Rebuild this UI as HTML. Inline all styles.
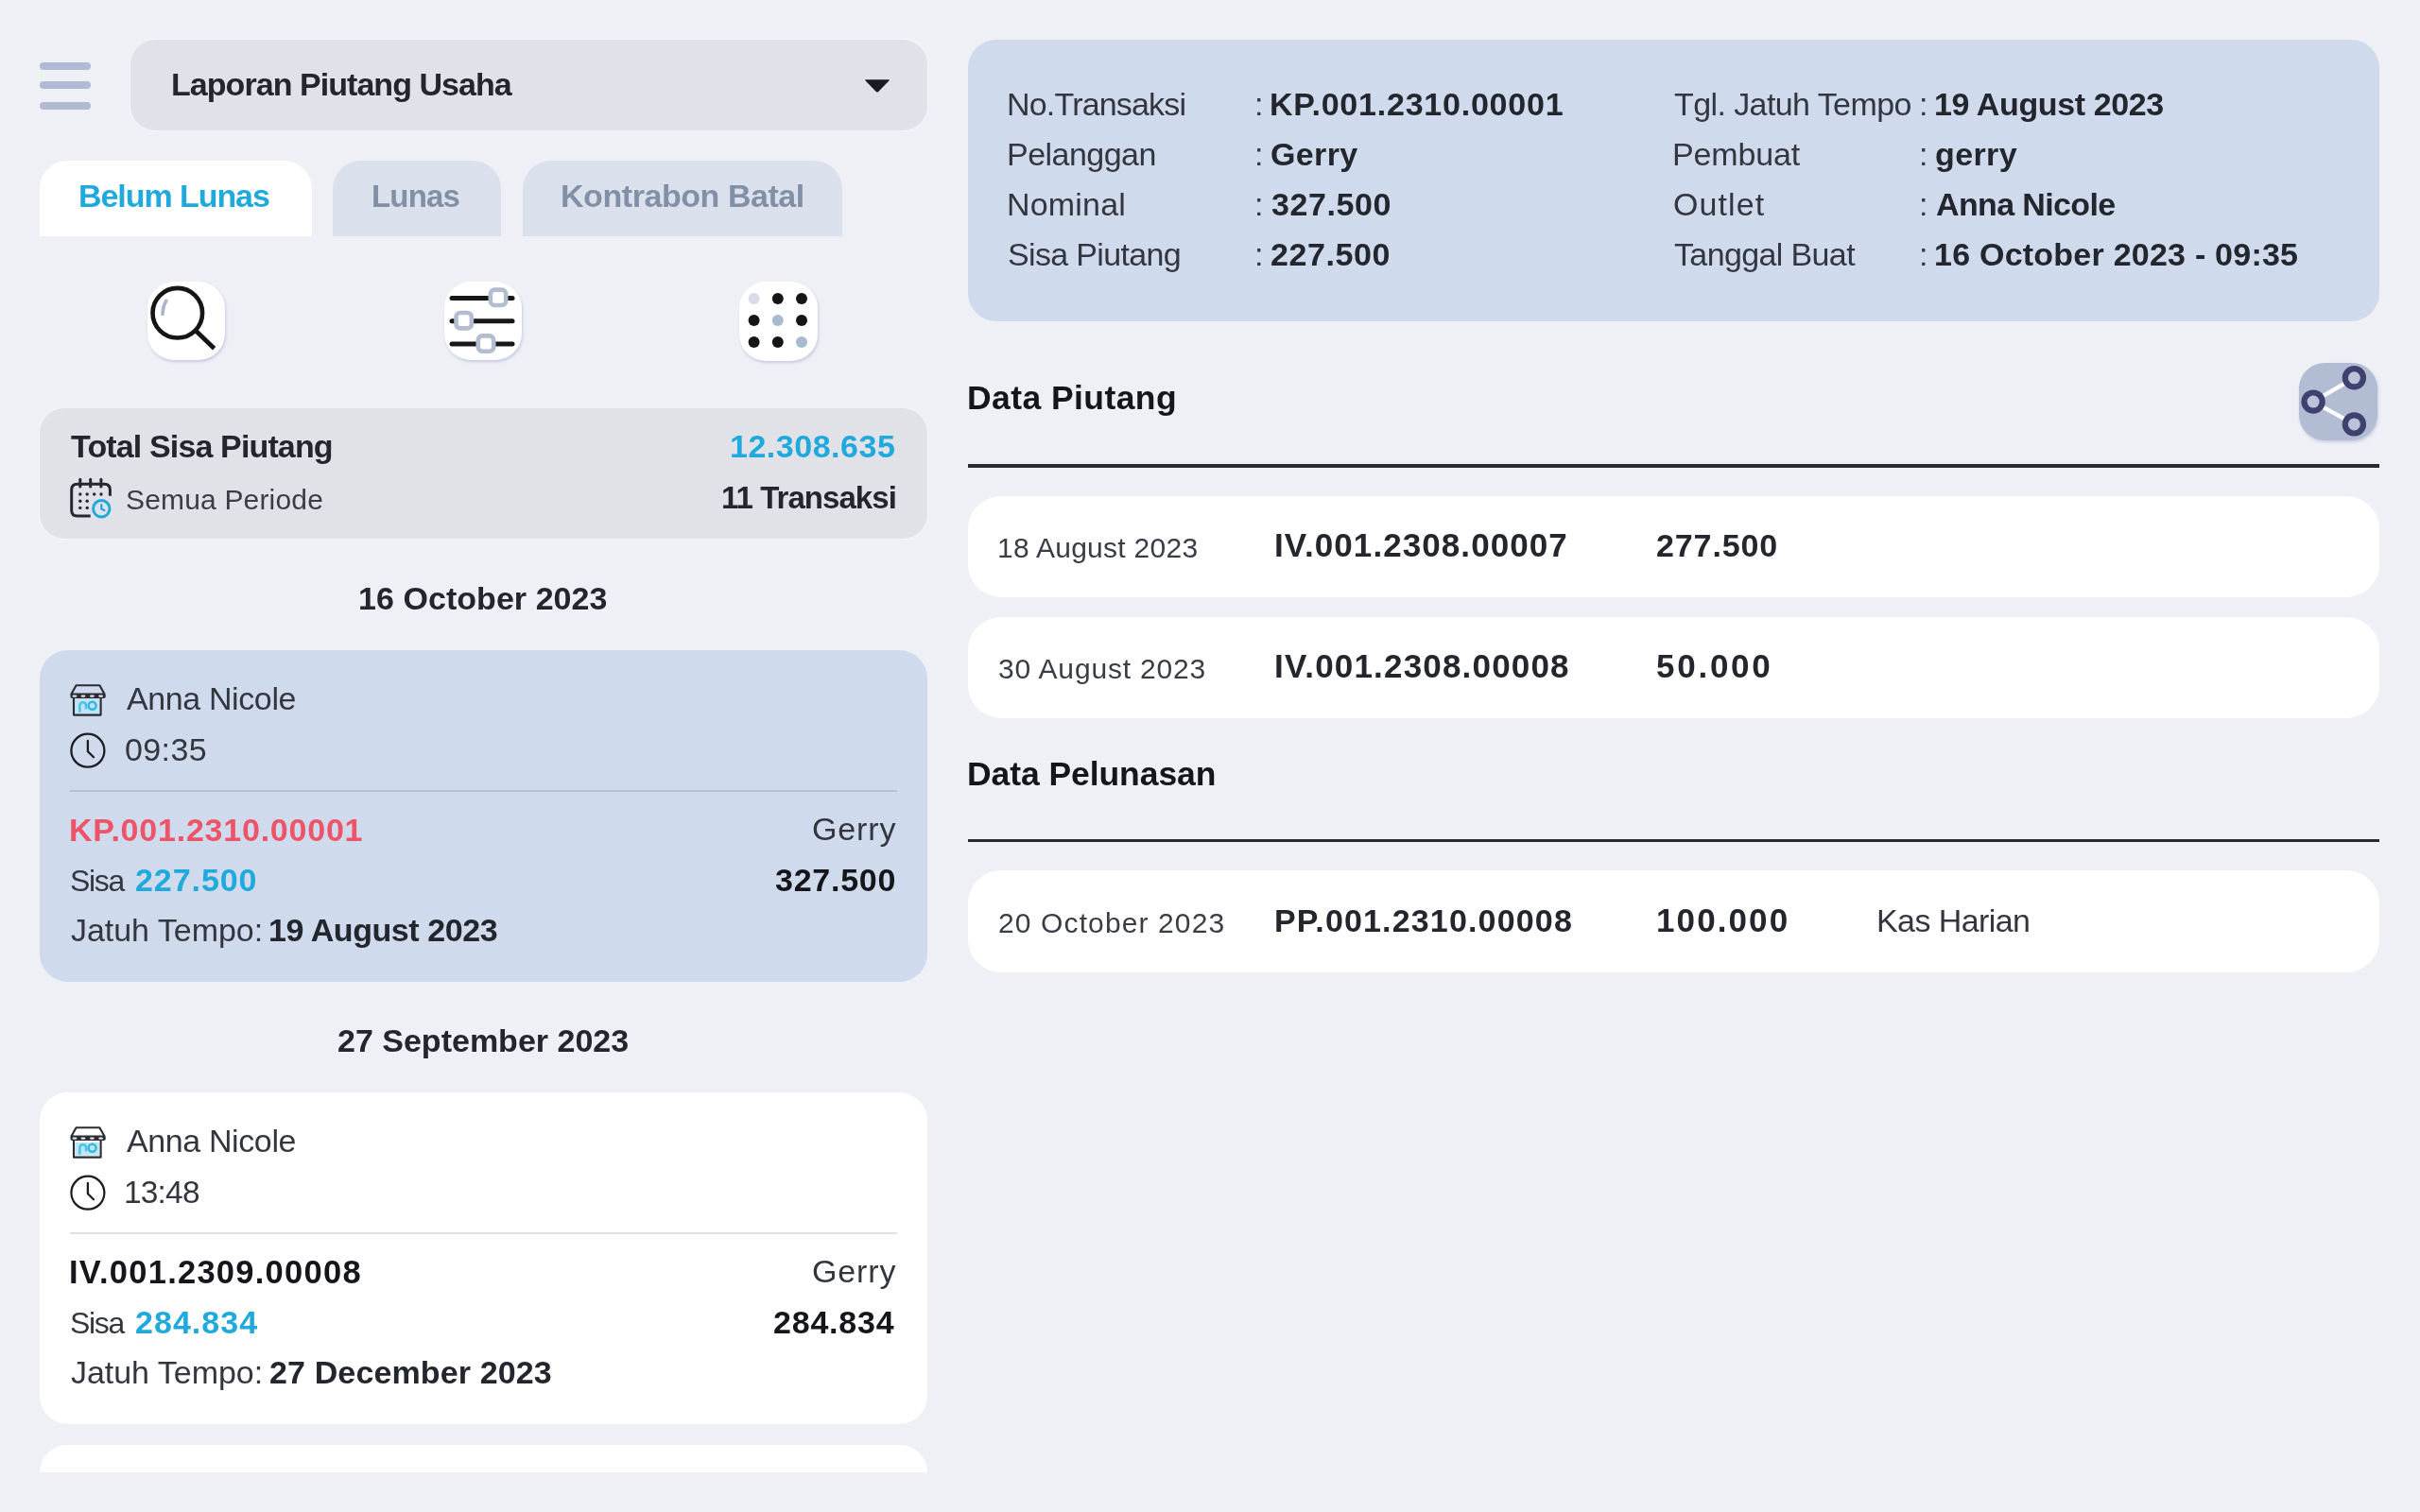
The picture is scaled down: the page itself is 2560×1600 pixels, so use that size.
<!DOCTYPE html>
<html lang="id"><head><meta charset="utf-8"><title>Laporan Piutang Usaha</title>
<style>
html,body{margin:0;padding:0}
body{width:2560px;height:1600px;overflow:hidden;background:#eef0f6;position:relative;font-family:"Liberation Sans",sans-serif}
.b{position:absolute;display:block}
.t{position:absolute;white-space:nowrap;display:block;will-change:transform}
</style></head><body>
<div class="b" style="left:42px;top:66px;width:54px;height:8px;background:#b0bad2;border-radius:4px;"></div>
<div class="b" style="left:42px;top:86px;width:54px;height:8px;background:#b0bad2;border-radius:4px;"></div>
<div class="b" style="left:42px;top:108px;width:54px;height:8px;background:#b0bad2;border-radius:4px;"></div>
<div class="b" style="left:138px;top:42px;width:843px;height:95.5px;background:#e1e2e9;border-radius:26px;box-shadow:0 0 3px rgba(255,255,255,.8);"></div>
<span class="t" style="left:180.75px;top:72.00px;font-size:34px;line-height:34px;letter-spacing:-0.948px;color:#24262e;font-weight:700;">Laporan Piutang Usaha</span>
<svg class="b" style="left:913px;top:82px" width="30" height="18" viewBox="0 0 30 18"><path d="M3.2 2.2 H26.8 Q28.6 2.2 27.4 3.6 L16.2 15 Q15 16.2 13.8 15 L2.6 3.6 Q1.4 2.2 3.2 2.2Z" fill="#1b1c21"/></svg>
<div class="b" style="left:42px;top:170px;width:288px;height:80px;background:#ffffff;border-radius:30px 30px 0 0;"></div>
<div class="b" style="left:352px;top:170px;width:178px;height:80px;background:#dbe1ec;border-radius:30px 30px 0 0;"></div>
<div class="b" style="left:552.5px;top:170px;width:338px;height:80px;background:#dbe1ec;border-radius:30px 30px 0 0;"></div>
<span class="t" style="left:82.75px;top:190.00px;font-size:34px;line-height:34px;letter-spacing:-1.060px;color:#1fa9dc;font-weight:700;">Belum Lunas</span>
<span class="t" style="left:393.38px;top:191.00px;font-size:33px;line-height:33px;letter-spacing:-0.812px;color:#8190a6;font-weight:700;">Lunas</span>
<span class="t" style="left:592.75px;top:190.00px;font-size:34px;line-height:34px;letter-spacing:-0.441px;color:#8190a6;font-weight:700;">Kontrabon Batal</span>
<div class="b" style="left:156px;top:298px;width:82px;height:83px;background:#ffffff;border-radius:28px;box-shadow:1px 2px 3px rgba(170,172,205,.55);"></div>
<div class="b" style="left:470px;top:298px;width:82px;height:83px;background:#ffffff;border-radius:28px;box-shadow:1px 2px 3px rgba(170,172,205,.55);"></div>
<div class="b" style="left:782px;top:298px;width:83px;height:84px;background:#ffffff;border-radius:28px;box-shadow:1px 2px 3px rgba(170,172,205,.55);"></div>
<svg class="b" style="left:156px;top:298px" width="82" height="83" viewBox="156 298 82 83" fill="none">
<circle cx="187.8" cy="331.2" r="26.3" stroke="#151515" stroke-width="4.6"/>
<path d="M206.6 349.6 L226.6 368.8" stroke="#151515" stroke-width="4.8"/>
<path d="M175.8 318.4 Q172.2 324.5 172 332.4" stroke="#a9b3c9" stroke-width="3.6" stroke-linecap="round"/>
</svg>
<svg class="b" style="left:470px;top:298px" width="82" height="83" viewBox="470 298 82 83" fill="none">
<g stroke="#171717" stroke-width="5" stroke-linecap="round"><path d="M478 315.4H542"/><path d="M478 339.7H542"/><path d="M478 364H542"/></g>
<g stroke="#b3bdcf" stroke-width="4.6" fill="#ffffff"><rect x="518.8" y="306.6" width="16.4" height="16.4" rx="4.5"/><rect x="482.5" y="331" width="16.4" height="16.4" rx="4.5"/><rect x="505.8" y="355.4" width="16.4" height="16.4" rx="4.5"/></g>
</svg>
<svg class="b" style="left:782px;top:298px" width="82" height="83" viewBox="782 298 82 83">
<g fill="#161616"><circle cx="822.8" cy="316" r="6"/><circle cx="848" cy="316" r="6"/><circle cx="797.6" cy="339" r="6"/><circle cx="848" cy="339" r="6"/><circle cx="797.6" cy="362" r="6"/><circle cx="822.8" cy="362" r="6"/></g>
<circle cx="797.6" cy="316" r="6" fill="#d9dbe9"/><circle cx="822.8" cy="339" r="6" fill="#a9bacf"/><circle cx="848" cy="362" r="6" fill="#a9bacf"/>
</svg>
<div class="b" style="left:42px;top:431.5px;width:939px;height:138px;background:#e1e2e8;border-radius:26px;box-shadow:0 0 3px rgba(255,255,255,.8);"></div>
<span class="t" style="left:75.22px;top:455.00px;font-size:34px;line-height:34px;letter-spacing:-0.859px;color:#24262e;font-weight:700;">Total Sisa Piutang</span>
<span class="t" style="left:771.88px;top:455.00px;font-size:34px;line-height:34px;letter-spacing:0.519px;color:#1fa9dc;font-weight:700;">12.308.635</span>
<span class="t" style="left:132.65px;top:514.00px;font-size:30px;line-height:30px;letter-spacing:0.171px;color:#3a3d46;">Semua Periode</span>
<span class="t" style="left:762.80px;top:510.00px;font-size:33px;line-height:33px;letter-spacing:-0.955px;color:#24262e;font-weight:700;">11 Transaksi</span>
<svg class="b" style="left:70px;top:502px" width="54" height="52" viewBox="70 502 54 52" fill="none">
<path d="M116.4 524.7V518.3Q116.4 512.3 110.4 512.3H81.7Q75.7 512.3 75.7 518.3V540Q75.7 546 81.7 546H95.7" stroke="#26282f" stroke-width="3"/>
<g stroke="#26282f" stroke-width="3" stroke-linecap="round"><path d="M84.8 507.2V515"/><path d="M95.7 507.2V515"/><path d="M106.9 507.2V515"/></g>
<g fill="#26282f"><circle cx="84.8" cy="523" r="1.7"/><circle cx="92.2" cy="523" r="1.7"/><circle cx="99.7" cy="523" r="1.7"/><circle cx="107" cy="523" r="1.7"/><circle cx="84.8" cy="530.3" r="1.7"/><circle cx="92.2" cy="530.3" r="1.7"/><circle cx="84.8" cy="537.4" r="1.7"/><circle cx="92.2" cy="537.4" r="1.7"/></g>
<circle cx="107.3" cy="538.3" r="8.7" stroke="#1fa9dc" stroke-width="3"/>
<path d="M107.3 534.2V538.6L110.4 540" stroke="#1fa9dc" stroke-width="2.2" stroke-linecap="round"/>
</svg>
<span class="t" style="left:379.27px;top:616.00px;font-size:34px;line-height:34px;letter-spacing:0.052px;color:#24262e;font-weight:700;">16 October 2023</span>
<div class="b" style="left:42px;top:687.8px;width:939px;height:351px;background:#cfdaec;border-radius:30px;"></div>
<svg class="b" style="left:72px;top:722px" width="44" height="40" viewBox="72 722 44 40" fill="none">
<rect x="79.4" y="741" width="25.6" height="13.8" fill="#bfe6f8"/>
<path d="M84.4 753.8V746.8Q84.4 743.2 87.7 743.2Q91 743.2 91 746.8V750.6" stroke="#4cc4e6" stroke-width="2.5"/>
<circle cx="97.6" cy="746.8" r="4" stroke="#35b8e0" stroke-width="2.5"/>
<path d="M78 739V756.6H106.6V739" stroke="#2a2c34" stroke-width="2.1" stroke-linejoin="round"/>
<path d="M80.6 725.2H105.4L110.6 734.6H75.4Z" stroke="#2a2c34" stroke-width="2.1" stroke-linejoin="round"/>
<rect x="74.4" y="734" width="37.4" height="5" rx="2.5" fill="#2a2c34"/>
<g fill="#e4dfe6"><rect x="76.6" y="735.4" width="4.8" height="2.3" rx="1.1"/><rect x="85.6" y="735.4" width="4.8" height="2.3" rx="1.1"/><rect x="95" y="735.4" width="4.8" height="2.3" rx="1.1"/><rect x="104.2" y="735.4" width="4.8" height="2.3" rx="1.1"/></g>
</svg>
<span class="t" style="left:133.60px;top:722.00px;font-size:34px;line-height:34px;letter-spacing:-0.387px;color:#33363f;">Anna Nicole</span>
<svg class="b" style="left:72px;top:772px" width="44" height="44" viewBox="72 772 44 44" fill="none">
<circle cx="92.9" cy="794.2" r="17.5" stroke="#1d1e24" stroke-width="2.3"/>
<path d="M92.9 784V795.2L99 801.2" stroke="#1d1e24" stroke-width="2.3" stroke-linecap="round" stroke-linejoin="round"/>
</svg>
<span class="t" style="left:132.35px;top:776.00px;font-size:34px;line-height:34px;letter-spacing:0.381px;color:#33363f;">09:35</span>
<div class="b" style="left:74px;top:835.5px;width:875px;height:2px;background:#b5c1d6;border-radius:0;"></div>
<span class="t" style="left:73.15px;top:861.00px;font-size:34px;line-height:34px;letter-spacing:0.775px;color:#ee5468;font-weight:700;">KP.001.2310.00001</span>
<span class="t" style="left:859.17px;top:860.00px;font-size:34px;line-height:34px;letter-spacing:0.856px;color:#33363f;">Gerry</span>
<span class="t" style="left:73.53px;top:916.00px;font-size:32px;line-height:32px;letter-spacing:-1.300px;color:#33363f;">Sisa</span>
<span class="t" style="left:142.57px;top:914.00px;font-size:34px;line-height:34px;letter-spacing:0.933px;color:#1fa9dc;font-weight:700;">227.500</span>
<span class="t" style="left:819.85px;top:914.00px;font-size:34px;line-height:34px;letter-spacing:0.754px;color:#15161b;font-weight:700;">327.500</span>
<span class="t" style="left:74.90px;top:967.00px;font-size:34px;line-height:34px;letter-spacing:-0.036px;color:#33363f;">Jatuh Tempo:</span>
<span class="t" style="left:283.57px;top:967.00px;font-size:34px;line-height:34px;letter-spacing:-0.429px;color:#24262e;font-weight:700;">19 August 2023</span>
<span class="t" style="left:357.48px;top:1084.00px;font-size:34px;line-height:34px;letter-spacing:0.003px;color:#24262e;font-weight:700;">27 September 2023</span>
<div class="b" style="left:42px;top:1156px;width:939px;height:350.5px;background:#ffffff;border-radius:30px;"></div>
<svg class="b" style="left:72px;top:1190px" width="44" height="40" viewBox="72 722 44 40" fill="none">
<rect x="79.4" y="741" width="25.6" height="13.8" fill="#bfe6f8"/>
<path d="M84.4 753.8V746.8Q84.4 743.2 87.7 743.2Q91 743.2 91 746.8V750.6" stroke="#4cc4e6" stroke-width="2.5"/>
<circle cx="97.6" cy="746.8" r="4" stroke="#35b8e0" stroke-width="2.5"/>
<path d="M78 739V756.6H106.6V739" stroke="#2a2c34" stroke-width="2.1" stroke-linejoin="round"/>
<path d="M80.6 725.2H105.4L110.6 734.6H75.4Z" stroke="#2a2c34" stroke-width="2.1" stroke-linejoin="round"/>
<rect x="74.4" y="734" width="37.4" height="5" rx="2.5" fill="#2a2c34"/>
<g fill="#e4dfe6"><rect x="76.6" y="735.4" width="4.8" height="2.3" rx="1.1"/><rect x="85.6" y="735.4" width="4.8" height="2.3" rx="1.1"/><rect x="95" y="735.4" width="4.8" height="2.3" rx="1.1"/><rect x="104.2" y="735.4" width="4.8" height="2.3" rx="1.1"/></g>
</svg>
<span class="t" style="left:133.60px;top:1190.00px;font-size:34px;line-height:34px;letter-spacing:-0.387px;color:#33363f;">Anna Nicole</span>
<svg class="b" style="left:72px;top:1240px" width="44" height="44" viewBox="72 772 44 44" fill="none">
<circle cx="92.9" cy="794.2" r="17.5" stroke="#1d1e24" stroke-width="2.3"/>
<path d="M92.9 784V795.2L99 801.2" stroke="#1d1e24" stroke-width="2.3" stroke-linecap="round" stroke-linejoin="round"/>
</svg>
<span class="t" style="left:131.10px;top:1245.00px;font-size:33.5px;line-height:33.5px;letter-spacing:-0.825px;color:#33363f;">13:48</span>
<div class="b" style="left:74px;top:1303.5px;width:875px;height:2px;background:#dcdfe6;border-radius:0;"></div>
<span class="t" style="left:73.15px;top:1329.00px;font-size:34.5px;line-height:34.5px;letter-spacing:1.259px;color:#15161b;font-weight:700;">IV.001.2309.00008</span>
<span class="t" style="left:859.17px;top:1328.00px;font-size:34px;line-height:34px;letter-spacing:0.856px;color:#33363f;">Gerry</span>
<span class="t" style="left:73.53px;top:1384.00px;font-size:32px;line-height:32px;letter-spacing:-1.300px;color:#33363f;">Sisa</span>
<span class="t" style="left:142.57px;top:1382.00px;font-size:34px;line-height:34px;letter-spacing:1.046px;color:#1fa9dc;font-weight:700;">284.834</span>
<span class="t" style="left:818.48px;top:1382.00px;font-size:34px;line-height:34px;letter-spacing:0.796px;color:#15161b;font-weight:700;">284.834</span>
<span class="t" style="left:74.90px;top:1435.00px;font-size:34px;line-height:34px;letter-spacing:-0.036px;color:#33363f;">Jatuh Tempo:</span>
<span class="t" style="left:284.57px;top:1435.00px;font-size:34px;line-height:34px;letter-spacing:0.133px;color:#24262e;font-weight:700;">27 December 2023</span>
<div class="b" style="left:42px;top:1529px;width:939px;height:29px;background:#ffffff;border-radius:30px 30px 0 0;"></div>
<div class="b" style="left:1024px;top:42px;width:1493px;height:298px;background:#cfdaec;border-radius:30px;"></div>
<span class="t" style="left:1064.75px;top:93.00px;font-size:34px;line-height:34px;letter-spacing:-0.820px;color:#33363f;">No.Transaksi</span>
<span class="t" style="left:1326.50px;top:93.00px;font-size:34px;line-height:34px;letter-spacing:0.000px;color:#33363f;">:</span>
<span class="t" style="left:1343.05px;top:93.00px;font-size:34px;line-height:34px;letter-spacing:0.781px;color:#24262e;font-weight:700;">KP.001.2310.00001</span>
<span class="t" style="left:1064.75px;top:146.00px;font-size:34px;line-height:34px;letter-spacing:-0.531px;color:#33363f;">Pelanggan</span>
<span class="t" style="left:1326.50px;top:146.00px;font-size:34px;line-height:34px;letter-spacing:0.000px;color:#33363f;">:</span>
<span class="t" style="left:1343.92px;top:146.00px;font-size:34px;line-height:34px;letter-spacing:0.363px;color:#24262e;font-weight:700;">Gerry</span>
<span class="t" style="left:1064.75px;top:199.00px;font-size:34px;line-height:34px;letter-spacing:0.192px;color:#33363f;">Nominal</span>
<span class="t" style="left:1326.50px;top:199.00px;font-size:34px;line-height:34px;letter-spacing:0.000px;color:#33363f;">:</span>
<span class="t" style="left:1344.55px;top:199.00px;font-size:34px;line-height:34px;letter-spacing:0.571px;color:#24262e;font-weight:700;">327.500</span>
<span class="t" style="left:1066.00px;top:252.00px;font-size:34px;line-height:34px;letter-spacing:-0.668px;color:#33363f;">Sisa Piutang</span>
<span class="t" style="left:1326.50px;top:252.00px;font-size:34px;line-height:34px;letter-spacing:0.000px;color:#33363f;">:</span>
<span class="t" style="left:1344.17px;top:252.00px;font-size:34px;line-height:34px;letter-spacing:0.583px;color:#24262e;font-weight:700;">227.500</span>
<span class="t" style="left:1770.65px;top:93.00px;font-size:34px;line-height:34px;letter-spacing:-0.587px;color:#33363f;">Tgl. Jatuh Tempo</span>
<span class="t" style="left:2030.00px;top:93.00px;font-size:34px;line-height:34px;letter-spacing:0.000px;color:#33363f;">:</span>
<span class="t" style="left:2046.47px;top:93.00px;font-size:34px;line-height:34px;letter-spacing:-0.383px;color:#24262e;font-weight:700;">19 August 2023</span>
<span class="t" style="left:1768.65px;top:146.00px;font-size:34px;line-height:34px;letter-spacing:-0.154px;color:#33363f;">Pembuat</span>
<span class="t" style="left:2030.00px;top:146.00px;font-size:34px;line-height:34px;letter-spacing:0.000px;color:#33363f;">:</span>
<span class="t" style="left:2047.22px;top:146.00px;font-size:34px;line-height:34px;letter-spacing:0.400px;color:#24262e;font-weight:700;">gerry</span>
<span class="t" style="left:1769.90px;top:199.00px;font-size:34px;line-height:34px;letter-spacing:1.100px;color:#33363f;">Outlet</span>
<span class="t" style="left:2030.00px;top:199.00px;font-size:34px;line-height:34px;letter-spacing:0.000px;color:#33363f;">:</span>
<span class="t" style="left:2047.85px;top:199.00px;font-size:34px;line-height:34px;letter-spacing:-0.632px;color:#24262e;font-weight:700;">Anna Nicole</span>
<span class="t" style="left:1770.65px;top:252.00px;font-size:34px;line-height:34px;letter-spacing:-0.627px;color:#33363f;">Tanggal Buat</span>
<span class="t" style="left:2030.00px;top:252.00px;font-size:34px;line-height:34px;letter-spacing:0.000px;color:#33363f;">:</span>
<span class="t" style="left:2046.47px;top:252.00px;font-size:34px;line-height:34px;letter-spacing:0.233px;color:#24262e;font-weight:700;">16 October 2023 - 09:35</span>
<span class="t" style="left:1023.33px;top:404.00px;font-size:35.5px;line-height:35.5px;letter-spacing:0.423px;color:#15161b;font-weight:700;">Data Piutang</span>
<div class="b" style="left:2432px;top:384px;width:83px;height:82px;background:#b2bdd4;border-radius:27px;box-shadow:1px 2px 3px rgba(170,172,205,.5);"></div>
<svg class="b" style="left:2432px;top:384px" width="84" height="83" viewBox="2432 384 84 83" fill="none">
<path d="M2490.4 399.8L2447.1 425.1L2490.4 448.9" stroke="#ffffff" stroke-width="4.4" stroke-linejoin="round"/>
<g stroke="#3f426e" stroke-width="6.2" fill="#b9c3d9"><circle cx="2490.4" cy="399.8" r="9.6"/><circle cx="2447.1" cy="425.1" r="9.6"/><circle cx="2490.4" cy="448.9" r="9.6"/></g>
</svg>
<div class="b" style="left:1024px;top:491.4px;width:1493px;height:3.2px;background:#2a2b31;border-radius:0;"></div>
<div class="b" style="left:1024px;top:524.6px;width:1493px;height:107.8px;background:#ffffff;border-radius:35px;"></div>
<span class="t" style="left:1055.35px;top:565.00px;font-size:30px;line-height:30px;letter-spacing:0.277px;color:#3a3d46;">18 August 2023</span>
<span class="t" style="left:1348.15px;top:559.00px;font-size:35px;line-height:35px;letter-spacing:1.070px;color:#24262e;font-weight:700;">IV.001.2308.00007</span>
<span class="t" style="left:1751.67px;top:560.00px;font-size:34px;line-height:34px;letter-spacing:0.883px;color:#24262e;font-weight:700;">277.500</span>
<div class="b" style="left:1024px;top:652.6px;width:1493px;height:107.8px;background:#ffffff;border-radius:35px;"></div>
<span class="t" style="left:1056.47px;top:693.00px;font-size:30px;line-height:30px;letter-spacing:0.829px;color:#3a3d46;">30 August 2023</span>
<span class="t" style="left:1348.15px;top:687.00px;font-size:35px;line-height:35px;letter-spacing:1.183px;color:#24262e;font-weight:700;">IV.001.2308.00008</span>
<span class="t" style="left:1752.00px;top:687.00px;font-size:35px;line-height:35px;letter-spacing:2.750px;color:#24262e;font-weight:700;">50.000</span>
<span class="t" style="left:1023.12px;top:802.00px;font-size:35.5px;line-height:35.5px;letter-spacing:-0.075px;color:#15161b;font-weight:700;">Data Pelunasan</span>
<div class="b" style="left:1024px;top:888.2px;width:1493px;height:3.2px;background:#2a2b31;border-radius:0;"></div>
<div class="b" style="left:1024px;top:921.2px;width:1493px;height:107.8px;background:#ffffff;border-radius:35px;"></div>
<span class="t" style="left:1056.10px;top:962.00px;font-size:30px;line-height:30px;letter-spacing:1.118px;color:#3a3d46;">20 October 2023</span>
<span class="t" style="left:1348.15px;top:957.00px;font-size:34px;line-height:34px;letter-spacing:1.162px;color:#24262e;font-weight:700;">PP.001.2310.00008</span>
<span class="t" style="left:1751.88px;top:956.00px;font-size:35px;line-height:35px;letter-spacing:2.100px;color:#24262e;font-weight:700;">100.000</span>
<span class="t" style="left:1984.75px;top:957.00px;font-size:34px;line-height:34px;letter-spacing:-0.583px;color:#33363f;">Kas Harian</span>
</body></html>
